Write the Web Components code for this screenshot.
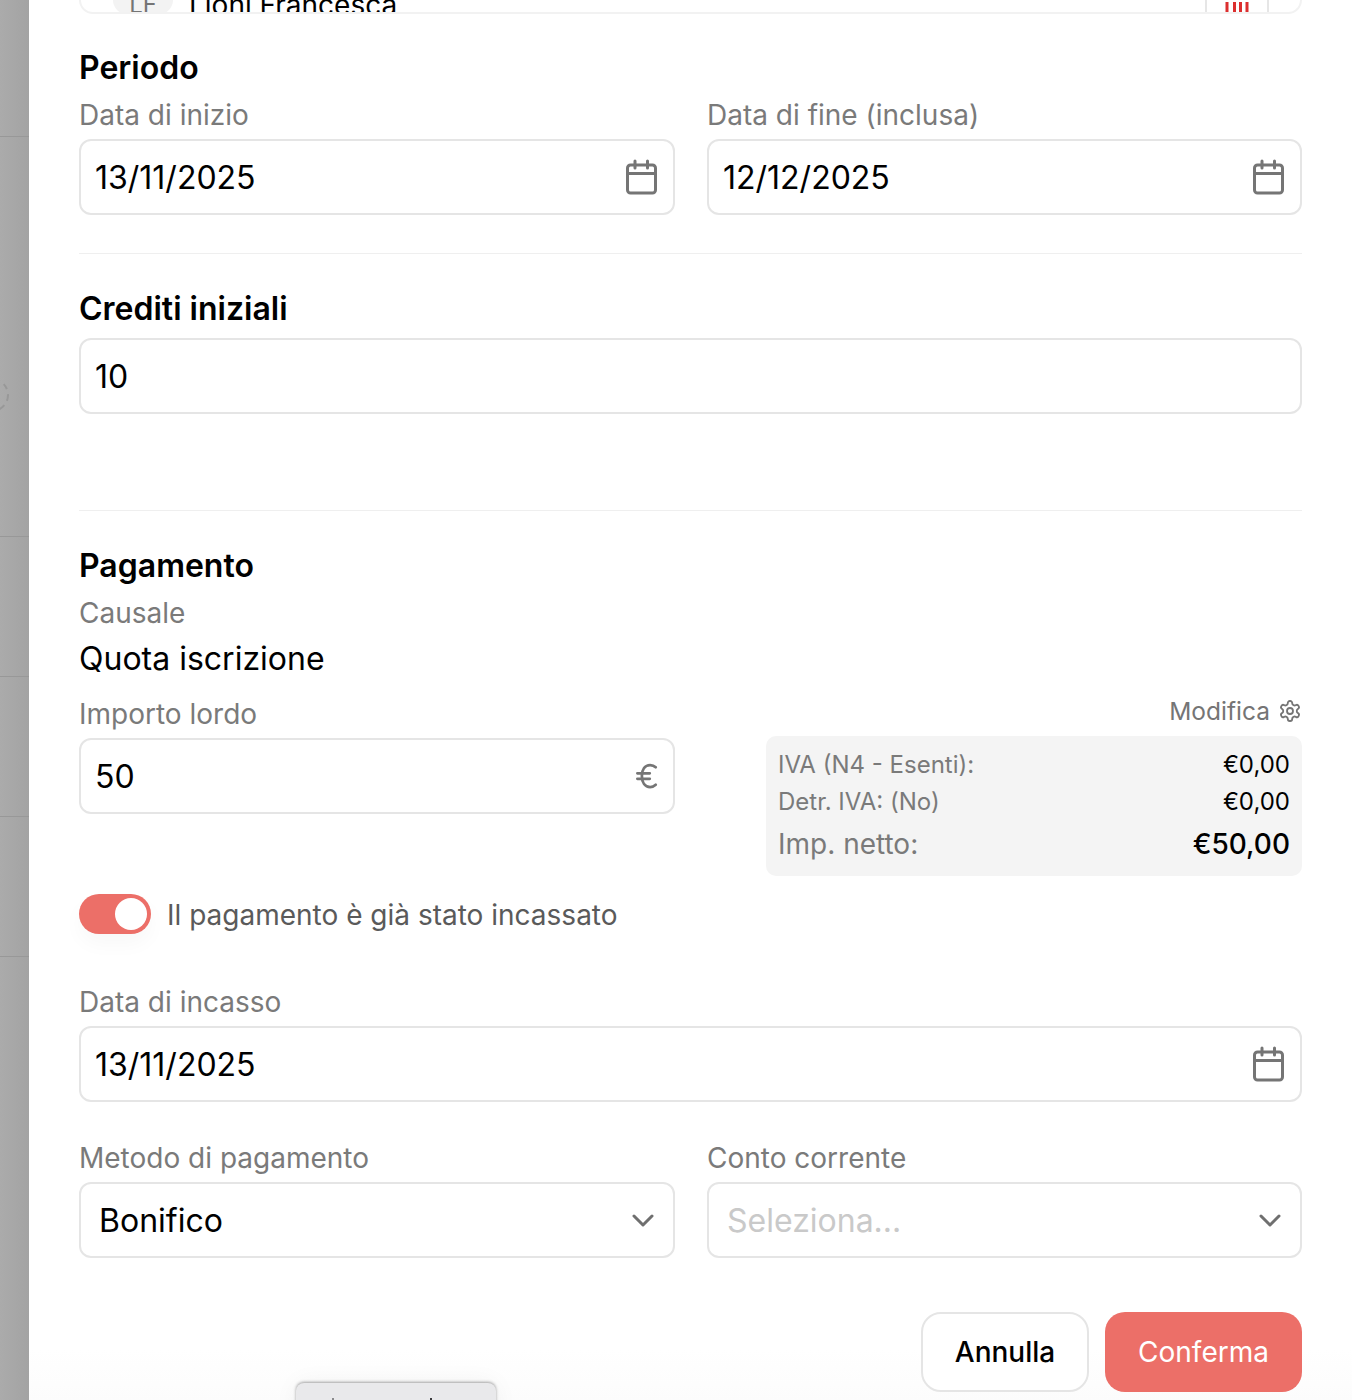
<!DOCTYPE html>
<html lang="it">
<head>
<meta charset="utf-8">
<title>Iscrizione</title>
<style>
  html, body { margin: 0; padding: 0; height: 1400px; overflow: hidden; background: #fff; }
  body { font-family: Inter, "Liberation Sans", sans-serif; }
</style>
</head>
<body>
<app-screen>
  <app-backdrop slot="backdrop"></app-backdrop>

  <member-row initials="LF" name="Lioni Francesca"></member-row>

  <form-heading bottom="9">Periodo</form-heading>
  <two-cols>
    <text-field label="Data di inizio" value="13/11/2025" icon="calendar"></text-field>
    <text-field label="Data di fine (inclusa)" value="12/12/2025" icon="calendar"></text-field>
  </two-cols>
  <form-divider gap="38"></form-divider>

  <form-heading top="35" bottom="9">Crediti iniziali</form-heading>
  <text-field value="10"></text-field>
  <form-divider gap="96"></form-divider>

  <form-heading top="35" bottom="9">Pagamento</form-heading>
  <read-field label="Causale" value="Quota iscrizione"></read-field>
  <two-cols top="19">
    <text-field label="Importo lordo" value="50" icon="euro"></text-field>
    <tax-box></tax-box>
  </two-cols>
  <pay-toggle>Il pagamento è già stato incassato</pay-toggle>
  <text-field style="margin-top:50px" label="Data di incasso" value="13/11/2025" icon="calendar"></text-field>
  <two-cols top="38">
    <text-field label="Metodo di pagamento" value="Bonifico" icon="chevron" inset="4"></text-field>
    <text-field label="Conto corrente" value="Seleziona..." icon="chevron" inset="4" placeholder></text-field>
  </two-cols>
  <form-actions></form-actions>

  <bottom-toast slot="overlay"></bottom-toast>
</app-screen>

<script>
const ICONS = {
  calendar: `<svg width="32" height="36" viewBox="0 0 32 36" fill="none" stroke="#757575" stroke-width="3" stroke-linecap="round" stroke-linejoin="round"><rect x="2.5" y="6" width="28" height="28" rx="3"/><path d="M2.5 14.500h28M10 2v7M22.500 2v7"/></svg>`,
  euro: `<svg width="22" height="28" viewBox="0 0 24 30" fill="none" stroke="#757575" stroke-width="3" stroke-linecap="round"><path d="M21.500 5.500C19.600 3.600 17.600 3 15.400 3 9.800 3 6.400 8 6.400 15s3.400 12 9 12c2.200 0 4.200-.7 6.100-2.500M1.500 12h13.500M1.500 18h13.500"/></svg>`,
  chevron: `<svg width="24" height="14" viewBox="0 0 24 14" fill="none" stroke="#6f6f6f" stroke-width="3" stroke-linecap="round" stroke-linejoin="round"><path d="M3 3l9 9 9-9"/></svg>`,
  gear: `<svg width="24" height="24" viewBox="0 0 24 24" fill="none" stroke="#757575" stroke-width="1.8" stroke-linecap="round" stroke-linejoin="round"><path d="M12.200 2h-.4a2 2 0 0 0-2 2v.2a2 2 0 0 1-1 1.700l-.4.3a2 2 0 0 1-2 0l-.2-.1a2 2 0 0 0-2.700.7l-.2.4a2 2 0 0 0 .7 2.700l.2.1a2 2 0 0 1 1 1.700v.5a2 2 0 0 1-1 1.800l-.2.1a2 2 0 0 0-.7 2.700l.2.4a2 2 0 0 0 2.700.7l.2-.1a2 2 0 0 1 2 0l.4.3a2 2 0 0 1 1 1.700v.2a2 2 0 0 0 2 2h.4a2 2 0 0 0 2-2v-.2a2 2 0 0 1 1-1.700l.4-.3a2 2 0 0 1 2 0l.2.1a2 2 0 0 0 2.700-.7l.2-.4a2 2 0 0 0-.7-2.700l-.2-.1a2 2 0 0 1-1-1.800v-.5a2 2 0 0 1 1-1.700l.2-.1a2 2 0 0 0 .7-2.700l-.2-.4a2 2 0 0 0-2.700-.7l-.2.1a2 2 0 0 1-2 0l-.4-.3a2 2 0 0 1-1-1.700V4a2 2 0 0 0-2-2z"/><circle cx="12" cy="12" r="3"/></svg>`
};

class AppScreen extends HTMLElement {
  constructor() {
    super();
    this.attachShadow({ mode: "open" }).innerHTML = `
      <style>
        :host { display: flex; width: 1352px; height: 1400px; overflow: hidden; position: relative; }
        #panel { flex: 1; min-width: 0; padding: 0 50px; display: flex; flex-direction: column; align-items: stretch;
          background: linear-gradient(180deg, #fff 1350px, #fcfcfc 1400px); }
      </style>
      <slot name="backdrop"></slot>
      <div id="panel"><slot></slot></div>
      <slot name="overlay"></slot>`;
  }
}

class AppBackdrop extends HTMLElement {
  constructor() {
    super();
    const rows = [137, 400, 140, 140, 140];
    this.attachShadow({ mode: "open" }).innerHTML = `
      <style>
        :host { display: block; flex: 0 0 29px; height: 1400px; position: relative; overflow: hidden;
          background: linear-gradient(90deg, #ababab 0%, #a3a3a3 100%); }
        .row { border-bottom: 1px solid #989898; box-sizing: border-box; }
        svg { position: absolute; left: -26px; top: 377px; }
      </style>
      ${rows.map(h => `<div class="row" style="height:${h}px"></div>`).join("")}
      <svg width="36" height="36" viewBox="0 0 36 36" fill="none" stroke="#989898" stroke-width="2" stroke-dasharray="6 5"><circle cx="18" cy="18" r="16"/></svg>`;
  }
}

class MemberRow extends HTMLElement {
  constructor() {
    super();
    this.attachShadow({ mode: "open" }).innerHTML = `
      <style>
        :host { display: block; height: 14px; box-sizing: border-box; overflow: hidden; flex: none;
          border: 2px solid #f2f2f2; border-top: 0; border-radius: 0 0 14px 14px; }
        #inner { display: flex; align-items: stretch; height: 60px; margin-top: -46px; padding-left: 32px; }
        #avatar { width: 60px; flex: none; border-radius: 14px; background: #f3f3f3; color: #757575;
          display: flex; align-items: flex-end; justify-content: center; font-size: 24px; line-height: 18px; }
        #name { margin-left: 16px; flex: 1; font-size: 28px; line-height: 18px; color: #000; display: flex; align-items: flex-end; }
        .cell { width: 60px; flex: none; border-left: 2px solid #e6e6e6; display: flex; justify-content: center; align-items: flex-end; }
        .cell.last { width: 31px; }
      </style>
      <div id="inner">
        <div id="avatar">${this.getAttribute("initials")}</div>
        <div id="name">${this.getAttribute("name")}</div>
        <div class="cell"><svg width="24" height="12" viewBox="0 0 24 12" fill="none" stroke="#dc2f2f" stroke-width="3"><path d="M2 0v12M9.500 0v12M15.500 0v12M22 0v12"/></svg></div>
        <div class="cell last"></div>
      </div>`;
  }
}

class FormHeading extends HTMLElement {
  constructor() {
    super();
    this.attachShadow({ mode: "open" }).innerHTML = `
      <style>
        :host { display: block; height: 40px; line-height: 40px; font-size: 32px; font-weight: 600; color: #000; flex: none;
          margin: ${this.getAttribute("top") || 34}px 0 ${this.getAttribute("bottom") || 10}px; }
      </style><slot></slot>`;
  }
}

class FormDivider extends HTMLElement {
  constructor() {
    super();
    this.attachShadow({ mode: "open" }).innerHTML = `
      <style>
        :host { display: block; height: 1px; background: #efefef; flex: none; margin-top: ${this.getAttribute("gap") || 38}px; }
      </style>`;
  }
}

class TwoCols extends HTMLElement {
  constructor() {
    super();
    this.attachShadow({ mode: "open" }).innerHTML = `
      <style>
        :host { display: grid; grid-template-columns: 596px 595px; column-gap: 32px; flex: none; margin-top: ${this.getAttribute("top") || 0}px; }
      </style><slot></slot>`;
  }
}

class TextField extends HTMLElement {
  constructor() {
    super();
    const label = this.getAttribute("label");
    const icon = this.getAttribute("icon");
    const inset = Number(this.getAttribute("inset") || 0);
    const right = { calendar: 16, chevron: 18, euro: 15 }[icon] || 15;
    this.attachShadow({ mode: "open" }).innerHTML = `
      <style>
        :host { display: block; flex: none; }
        #label { height: 36px; line-height: 36px; margin-bottom: 6px; font-size: 28px; color: #7a7a7a; }
        #box { height: 76px; box-sizing: border-box; border: 2px solid #e5e5e5; border-radius: 12px; background: #fff;
          display: flex; align-items: center; justify-content: space-between; padding: 0 ${right}px 0 ${14 + inset}px; }
        #value { font-size: 32px; color: ${this.hasAttribute("placeholder") ? "#c9c9c9" : "#000"}; }
        #icon { display: flex; }
      </style>
      ${label ? `<div id="label">${label}</div>` : ""}
      <div id="box">
        <div id="value">${this.getAttribute("value")}</div>
        ${icon ? `<div id="icon">${ICONS[icon]}</div>` : ""}
      </div>`;
  }
}

class ReadField extends HTMLElement {
  constructor() {
    super();
    this.attachShadow({ mode: "open" }).innerHTML = `
      <style>
        :host { display: block; flex: none; }
        #label { height: 36px; line-height: 36px; font-size: 28px; color: #7a7a7a; margin-bottom: 10px; }
        #value { height: 36px; line-height: 36px; font-size: 32px; color: #000; }
      </style>
      <div id="label">${this.getAttribute("label")}</div>
      <div id="value">${this.getAttribute("value")}</div>`;
  }
}

class TaxBox extends HTMLElement {
  constructor() {
    super();
    this.attachShadow({ mode: "open" }).innerHTML = `
      <style>
        :host { display: block; padding-left: 59px; }
        #edit { height: 30px; display: flex; justify-content: flex-end; align-items: center; gap: 8px; margin-bottom: 10px; font-size: 24.5px; color: #757575; }
        #edit svg { display: block; }
        #box { height: 140px; box-sizing: border-box; background: #f4f4f4; border-radius: 10px; padding: 10px 12px 0; }
        .line { display: flex; justify-content: space-between; align-items: center; height: 37px; font-size: 24px; color: #7a7a7a; }
        .line b { font-weight: 400; color: #000; }
        .line.total { height: 47px; font-size: 28px; }
        .line.total b { font-weight: 500; }
      </style>
      <div id="edit">Modifica ${ICONS.gear}</div>
      <div id="box">
        <div class="line"><span>IVA (N4 - Esenti):</span><b>€0,00</b></div>
        <div class="line"><span>Detr. IVA: (No)</span><b>€0,00</b></div>
        <div class="line total"><span>Imp. netto:</span><b>€50,00</b></div>
      </div>`;
  }
}

class PayToggle extends HTMLElement {
  constructor() {
    super();
    this.attachShadow({ mode: "open" }).innerHTML = `
      <style>
        :host { display: flex; align-items: center; gap: 16px; height: 40px; margin-top: 18px; flex: none; font-size: 28px; color: #5a5a5a; }
        #track { width: 72px; height: 40px; box-sizing: border-box; padding: 4px; border-radius: 20px; background: #ec6f68;
          display: flex; justify-content: flex-end; box-shadow: 0 10px 20px rgba(0,0,0,.03); }
        #knob { width: 32px; height: 32px; border-radius: 50%; background: #fff; }
        span { margin-top: 2px; }
      </style>
      <div id="track"><div id="knob"></div></div>
      <span><slot></slot></span>`;
  }
}

class FormActions extends HTMLElement {
  constructor() {
    super();
    this.attachShadow({ mode: "open" }).innerHTML = `
      <style>
        :host { display: flex; justify-content: flex-end; gap: 16px; margin-top: 54px; flex: none; }
        div { height: 80px; box-sizing: border-box; border-radius: 20px; display: flex; align-items: center; justify-content: center; font-size: 28px; }
        #cancel { width: 168px; border: 2px solid #e5e5e5; color: #000; background: #fff; font-weight: 500; }
        #ok { width: 197px; background: #ec6f68; color: #fff; }
      </style>
      <div id="cancel">Annulla</div><div id="ok">Conferma</div>`;
  }
}

class BottomToast extends HTMLElement {
  constructor() {
    super();
    this.attachShadow({ mode: "open" }).innerHTML = `
      <style>
        :host { position: absolute; left: 296px; top: 1383px; width: 200px; height: 40px; box-sizing: border-box;
          padding: 15px 0 0 36px; display: flex; gap: 96px; align-items: flex-start;
          background: #e9e9eb; border-radius: 8px 8px 0 0; box-shadow: 0 -1px 3px rgba(0,0,0,.35), 0 0 24px rgba(0,0,0,.05); }
        i { display: block; width: 2px; height: 4px; background: #8a8a8c; }
        i + i { background: #3a3a3c; }
      </style>
      <i></i><i></i>`;
  }
}

customElements.define("app-screen", AppScreen);
customElements.define("app-backdrop", AppBackdrop);
customElements.define("member-row", MemberRow);
customElements.define("form-heading", FormHeading);
customElements.define("form-divider", FormDivider);
customElements.define("two-cols", TwoCols);
customElements.define("text-field", TextField);
customElements.define("read-field", ReadField);
customElements.define("tax-box", TaxBox);
customElements.define("pay-toggle", PayToggle);
customElements.define("form-actions", FormActions);
customElements.define("bottom-toast", BottomToast);
</script>
</body>
</html>
